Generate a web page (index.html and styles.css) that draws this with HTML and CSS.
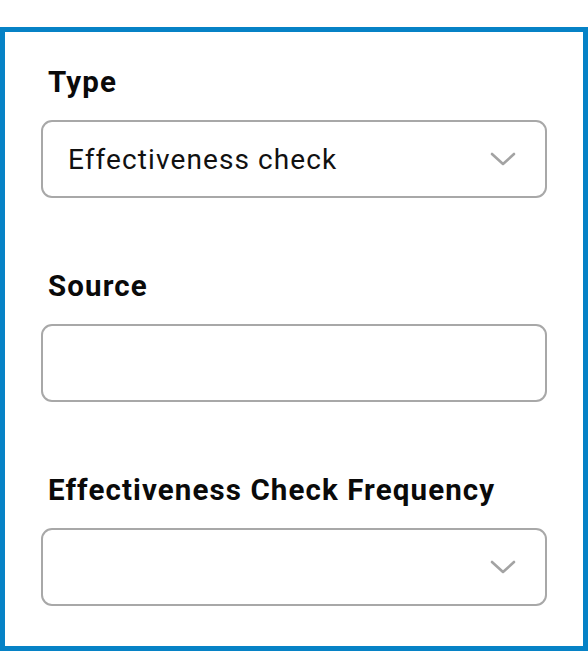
FILE: index.html
```html
<!DOCTYPE html>
<html>
<head>
<meta charset="utf-8">
<link rel="stylesheet" href="styles.css">
</head>
<body>
<div class="frame">
  <div class="field">
    <div class="label">Type</div>
    <div class="control select">
      <span class="value">Effectiveness check</span>
      <svg class="chev" width="26" height="14" viewBox="0 0 26 14"><path d="M2 2 L13 12 L24 2" fill="none" stroke="#a3a3a3" stroke-width="2.6" stroke-linecap="round" stroke-linejoin="round"/></svg>
    </div>
  </div>
  <div class="field">
    <div class="label">Source</div>
    <div class="control"></div>
  </div>
  <div class="field">
    <div class="label">Effectiveness Check Frequency</div>
    <div class="control select">
      <span class="value"></span>
      <svg class="chev" width="26" height="14" viewBox="0 0 26 14"><path d="M2 2 L13 12 L24 2" fill="none" stroke="#a3a3a3" stroke-width="2.6" stroke-linecap="round" stroke-linejoin="round"/></svg>
    </div>
  </div>
</div>
</body>
</html>
```

FILE: styles.css
```css
html, body {
  margin: 0;
  padding: 0;
  background: #fff;
}
body {
  font-family: Roboto, "Liberation Sans", sans-serif;
  color: #000;
}
.frame {
  box-sizing: border-box;
  margin-top: 27px;
  width: 588px;
  height: 624px;
  border: 5px solid #0682c6;
  padding: 33px 36px 0 36px;
  display: flex;
  flex-direction: column;
  gap: 71px;
}
.field {
  display: flex;
  flex-direction: column;
}
.label {
  font-size: 29.5px;
  font-weight: 700;
  line-height: 34px;
  letter-spacing: 1.1px;
  padding-left: 7px;
  margin-bottom: 21px;
  color: #0a0a0a;
}
.control {
  box-sizing: border-box;
  height: 78px;
  width: 506px;
  border: 2px solid #a8a8a8;
  border-radius: 11px;
  display: flex;
  align-items: center;
  justify-content: space-between;
  padding: 0 29px 0 25px;
}
.value {
  font-size: 28px;
  font-weight: 400;
  letter-spacing: 1.1px;
  color: #111;
}
.chev {
  display: block;
}
```
